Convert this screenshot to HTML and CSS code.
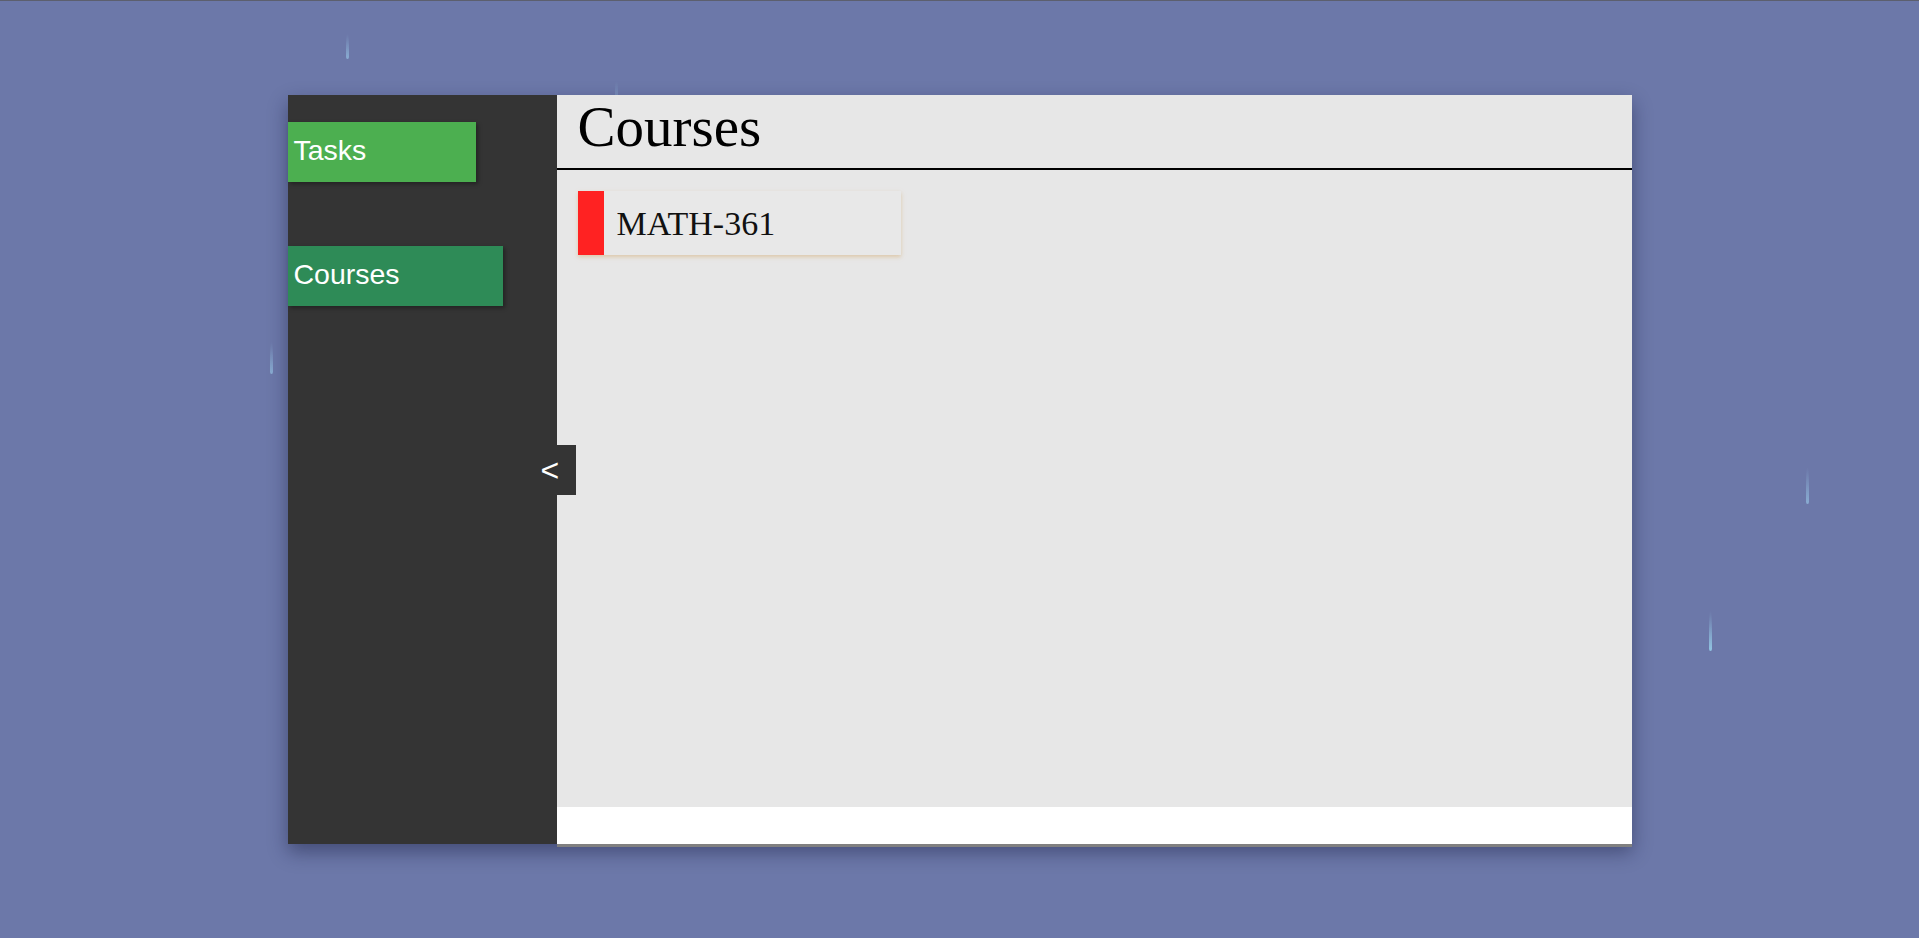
FILE: index.html
```html
<!DOCTYPE html>
<html>
<head>
<meta charset="utf-8">
<title>Courses</title>
<link rel="stylesheet" href="styles.css">
</head>
<body>
<div class="rain">
  <span class="drop d1"></span>
  <span class="drop d2"></span>
  <span class="drop d3"></span>
  <span class="drop d4"></span>
  <span class="drop d5"></span>
</div>
<div class="app">
  <nav class="sidebar">
    <div class="nav-item tasks">Tasks</div>
    <div class="nav-item courses">Courses</div>
    <div class="collapse">&lt;</div>
  </nav>
  <section class="main">
    <header class="header"><h1 class="title">Courses</h1></header>
    <div class="content">
      <div class="course-card">
        <span class="course-color"></span>
        <span class="course-name">MATH-361</span>
      </div>
    </div>
    <div class="footer"></div>
  </section>
</div>
</body>
</html>
```

FILE: styles.css
```css
html, body {
  margin: 0;
  padding: 0;
}
body {
  background: #6c78a9;
  height: 938px;
  border-top: 1px solid #5c5f6e;
  box-sizing: border-box;
  overflow: hidden;
  position: relative;
  font-family: "Liberation Sans", Arial, sans-serif;
}
.rain {
  position: absolute;
  inset: 0;
  pointer-events: none;
}
.drop {
  position: absolute;
  width: 3px;
  border-radius: 50% 50% 2px 2px / 90% 90% 3px 3px;
  background: linear-gradient(to bottom, rgba(150, 190, 225, 0) 0%, rgba(150, 195, 228, 0.7) 100%);
}
.d1 { left: 346px; top: 33px; height: 25px; }
.d2 { left: 270px; top: 341px; height: 32px; }
.d3 { left: 1806px; top: 466px; height: 37px; }
.d4 { left: 1709px; top: 610px; height: 40px; background: linear-gradient(to bottom, rgba(150, 200, 230, 0) 0%, rgba(150, 205, 232, 0.9) 100%); }
.d5 { left: 615px; top: 80px; height: 18px; opacity: 0.5; }

.app {
  position: relative;
  width: 1344px;
  height: 749px;
  margin: 94px auto 0;
  display: flex;
  align-items: flex-start;
  box-shadow: 0 8px 18px rgba(20, 25, 60, 0.45);
}
.sidebar {
  position: relative;
  width: 269px;
  height: 749px;
  flex: none;
  background: #343434;
  padding-top: 27px;
  box-sizing: border-box;
  display: flex;
  flex-direction: column;
  gap: 64px;
  z-index: 2;
}
.nav-item {
  height: 60px;
  line-height: 56px;
  padding-left: 6px;
  color: #fff;
  font-size: 28.5px;
  box-sizing: border-box;
  box-shadow: 2px 2px 4px rgba(0, 0, 0, 0.35);
}
.tasks {
  width: 70%;
  background: #4caf50;
}
.courses {
  width: 80%;
  background: #2e8b57;
}
.collapse {
  position: absolute;
  left: 249px;
  top: 350px;
  width: 39px;
  height: 50px;
  background: #343434;
  color: #fff;
  font-size: 32px;
  line-height: 50px;
  padding-left: 4px;
  box-sizing: border-box;
}
.main {
  flex: 1;
  display: flex;
  flex-direction: column;
  height: 752px;
  border-bottom: 3px solid #808080;
  box-sizing: border-box;
}
.header {
  height: 75px;
  background: #e7e7e7;
  border-bottom: 2px solid #000;
  box-sizing: border-box;
  padding-left: 21px;
}
.title {
  margin: 0;
  font-family: "Liberation Serif", "Times New Roman", serif;
  font-weight: normal;
  font-size: 57px;
  line-height: 64px;
  color: #000;
}
.content {
  height: 637px;
  background: #e7e7e7;
  padding: 21px 21px;
  box-sizing: border-box;
}
.course-card {
  width: 323px;
  height: 64px;
  display: flex;
  background: #e8e8e8;
  box-shadow: 0 2px 4px rgba(215, 180, 130, 0.6);
}
.course-color {
  width: 26px;
  background: #ff2222;
  flex: none;
}
.course-name {
  padding-left: 13px;
  padding-top: 1px;
  font-family: "Liberation Serif", "Times New Roman", serif;
  font-size: 34px;
  line-height: 64px;
  color: #111;
}
.footer {
  flex: 1;
  background: #fff;
}
```
